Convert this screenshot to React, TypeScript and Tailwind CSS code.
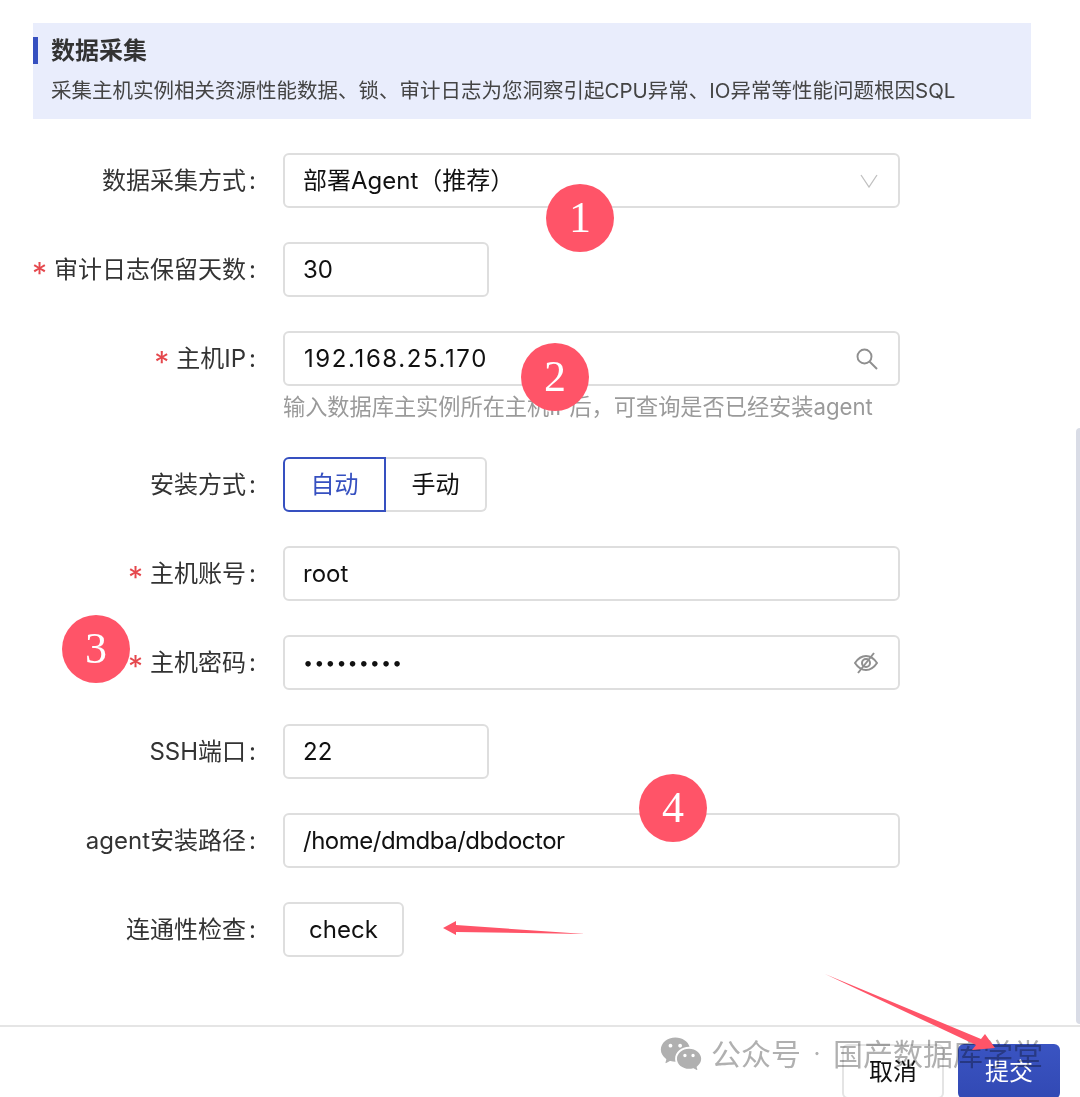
import { RiWechatFill } from 'react-icons/ri';

const boxClass = 'flex h-[55px] items-center rounded-md border-2 border-[#dedede] bg-white px-[18px] text-[24px] text-[#111]';

function Label({ text, required }: { text: string; required?: boolean }) {
  return (
    <div className="flex w-[283px] shrink-0 items-center justify-end whitespace-nowrap pr-[27px] text-[24px] text-[#333]">
      {required && <span className="mr-[7px] translate-y-[3px] text-[30px] leading-none text-[#e5484d]">*</span>}
      <span>{text}</span>
      <span className="ml-[3px]">:</span>
    </div>
  );
}

function Row({ label, required, children }: { label: string; required?: boolean; children: React.ReactNode }) {
  return (
    <div className="mb-[34px] flex h-[55px] items-stretch">
      <Label text={label} required={required} />
      {children}
    </div>
  );
}

function Chevron() {
  return (
    <svg width="18" height="14" viewBox="0 0 18 14" fill="none" stroke="#c0c0c0" strokeWidth="1.300" className="mr-[2px]">
      <path d="M1 1L9 13L17 1" />
    </svg>
  );
}

function SearchIcon() {
  return (
    <svg width="22" height="22" viewBox="0 0 22 22" fill="none" stroke="#8f8f8f" strokeWidth="1.900" className="mr-[2px]">
      <circle cx="8.500" cy="8.500" r="7" />
      <path d="M13.500 13.500L21 21" />
    </svg>
  );
}

function EyeOff() {
  return (
    <svg width="24" height="22" viewBox="0 0 24 22" fill="none" stroke="#8f8f8f" strokeWidth="2" className="mr-[2px]">
      <path d="M1 11C4 6.500 7.500 4 12 4S20 6.500 23 11C20 15.500 16.500 18 12 18S4 15.500 1 11Z" />
      <circle cx="12" cy="11" r="4" />
      <path d="M20 1L4 21" />
    </svg>
  );
}

function Badge({ n, className }: { n: number; className: string }) {
  return (
    <div className={`absolute flex h-[68px] w-[68px] items-center justify-center rounded-full bg-[#ff5468] font-['Liberation_Serif',serif] text-[44px] text-white ${className}`}>
      {n}
    </div>
  );
}

export default function App() {
  return (
    <div className="relative h-[1097px] w-[1080px] overflow-hidden bg-white font-['Inter','Noto_Sans_CJK_SC',sans-serif]">
      <div className="px-[33px] pt-[23px]">
        <div className="h-[96px] w-[998px] bg-[#e9edfc] pt-[14px]">
          <div className="flex h-[27px] items-center border-l-[5px] border-[#3650c0] pl-[13px] text-[24px] font-semibold text-[#333]">
            数据采集
          </div>
          <div className="mt-[13px] whitespace-nowrap pl-[18px] text-[20.500px] leading-[28px] text-[#444]">
            采集主机实例相关资源性能数据、锁、审计日志为您洞察引起CPU异常、IO异常等性能问题根因SQL
          </div>
        </div>
      </div>

      <div className="mt-[34px]">
        <Row label="数据采集方式">
          <div className={`${boxClass} w-[617px] justify-between`}>
            <span>部署Agent（推荐）</span>
            <Chevron />
          </div>
        </Row>
        <Row label="审计日志保留天数" required>
          <div className={`${boxClass} w-[206px]`}>30</div>
        </Row>
        <Row label="主机IP" required>
          <div className={`${boxClass} w-[617px] justify-between`}>
            <span className="ml-[1px] tracking-[1.600px]">192.168.25.170</span>
            <SearchIcon />
          </div>
        </Row>
        <div className="-mt-[34px] mb-[28px] h-[43px] whitespace-nowrap pl-[283px] pt-[6px] text-[22.200px] leading-[30px] text-[#9a9a9a]">
          输入数据库主实例所在主机IP后，可查询是否已经安装agent
        </div>
        <Row label="安装方式">
          <div className="flex">
            <div className="flex h-[55px] w-[103px] items-center justify-center rounded-l-md border-2 border-[#3650c0] text-[24px] text-[#3650c0]">自动</div>
            <div className="flex h-[55px] w-[101px] items-center justify-center rounded-r-md border-2 border-l-0 border-[#dedede] text-[24px] text-[#111]">手动</div>
          </div>
        </Row>
        <Row label="主机账号" required>
          <div className={`${boxClass} w-[617px]`}>root</div>
        </Row>
        <Row label="主机密码" required>
          <div className={`${boxClass} w-[617px] justify-between`}>
            <span className="text-[18px] tracking-[1px]">•••••••••</span>
            <EyeOff />
          </div>
        </Row>
        <Row label="SSH端口">
          <div className={`${boxClass} w-[206px]`}>22</div>
        </Row>
        <Row label="agent安装路径">
          <div className={`${boxClass} w-[617px]`}>
            <span className="tracking-[-0.500px]">/home/dmdba/dbdoctor</span>
          </div>
        </Row>
        <Row label="连通性检查">
          <div className={`${boxClass} w-[121px] justify-center px-0`}>check</div>
        </Row>
      </div>

      <div className="absolute inset-x-0 top-[1025px] flex h-[72px] items-start justify-end gap-[14px] border-t-2 border-[#e5e5e5] pr-[20px] pt-[17px]">
        <div className="flex h-[55px] w-[102px] items-center justify-center rounded-md border-2 border-[#e4e4e4] text-[24px] text-[#111]">取消</div>
        <div className="flex h-[55px] w-[102px] items-center justify-center rounded-md bg-gradient-to-b from-[#3a54c2] to-[#3249b4] text-[24px] text-white">提交</div>
      </div>

      <div className="absolute right-0 top-[428px] h-[596px] w-[4px] rounded-l bg-[#d9dce6]" />

      <div className="absolute left-[659px] top-[1032px] flex items-center whitespace-nowrap text-[#b0b0b0] mix-blend-multiply">
        <RiWechatFill size={44} />
        <span className="ml-[8px] text-[30px] leading-[44px]">公众号</span>
        <span className="w-[32px] text-center text-[24px] leading-[44px]">·</span>
        <span className="text-[30px] leading-[44px]">国产数据库学堂</span>
      </div>

      <Badge n={1} className="left-[546px] top-[184px]" />
      <Badge n={2} className="left-[521px] top-[343px]" />
      <Badge n={3} className="left-[62px] top-[615px]" />
      <Badge n={4} className="left-[639px] top-[774px]" />

      <svg className="absolute left-0 top-0" width="1080" height="1097" fill="#ff5468">
        <polygon points="443,928 456,921 456,925 585,934 456,932 456,935" />
        <polygon points="825,974 981,1039 985,1034 995,1048 972,1050 976,1045" />
      </svg>
    </div>
  );
}
